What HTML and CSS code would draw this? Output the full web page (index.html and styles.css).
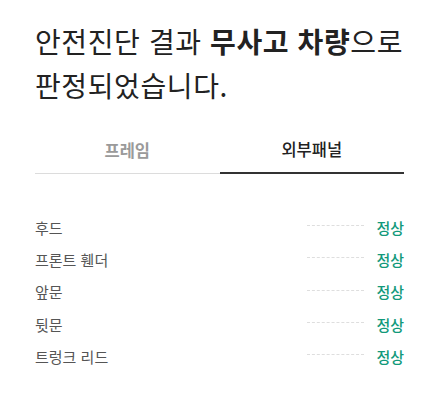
FILE: index.html
```html
<!DOCTYPE html>
<html lang="ko">
<head>
  <meta charset="UTF-8" />
  <meta name="viewport" content="width=device-width, initial-scale=1.0"/>
  <title>안전진단 결과</title>
  <link rel="stylesheet" href="styles.css">
</head>
<body>

  <div class="result">
    <h1 class="result-title">안전진단 결과 <strong>무사고 차량</strong>으로<br>판정되었습니다.</h1>

    <div class="tabs">
      <div class="tab">프레임</div>
      <div class="tab active">외부패널</div>
    </div>

    <ul class="check-list">
      <li class="check-row"><span class="part">후드</span><span class="dots"></span><span class="state">정상</span></li>
      <li class="check-row"><span class="part">프론트 휀더</span><span class="dots"></span><span class="state">정상</span></li>
      <li class="check-row"><span class="part">앞문</span><span class="dots"></span><span class="state">정상</span></li>
      <li class="check-row"><span class="part">뒷문</span><span class="dots"></span><span class="state">정상</span></li>
      <li class="check-row"><span class="part">트렁크 리드</span><span class="dots"></span><span class="state">정상</span></li>
    </ul>
  </div>

</body>
</html>
```

FILE: styles.css
```css
body {
  margin: 0;
  font-family: "Noto Sans CJK KR", "Noto Sans", sans-serif;
  background-color: #fff;
  color: #333;
}

.result {
  padding: 19px 31px 0 35px;
}

.result-title {
  margin: 0;
  font-size: 28px;
  line-height: 44px;
  font-weight: 400;
  color: #222;
  letter-spacing: 0.6px;
  white-space: nowrap;
}

.result-title strong {
  font-weight: 700;
}

.tabs {
  display: flex;
  align-items: flex-end;
  margin-top: 19px;
}

.tab {
  flex: 1;
  height: 48px;
  box-sizing: border-box;
  display: flex;
  align-items: center;
  justify-content: center;
  font-size: 16.5px;
  font-weight: 700;
  color: #9a9a9a;
  border-bottom: 1px solid #dcdcdc;
  padding-top: 1px;
}

.tab.active {
  color: #222;
  font-weight: 500;
  border-bottom: 2px solid #333;
  padding-top: 0;
}

.check-list {
  list-style: none;
  margin: 37px 0 0;
  padding: 0;
}

.check-row {
  display: flex;
  align-items: center;
  height: 32.3px;
  font-size: 15px;
}

.part {
  flex: 1;
  color: #555;
}

.dots {
  width: 57px;
  margin-right: 12px;
  margin-bottom: 3px;
  border-top: 1px dashed #dedede;
}

.state {
  color: #12997a;
  font-weight: 500;
  font-size: 15px;
}
```
